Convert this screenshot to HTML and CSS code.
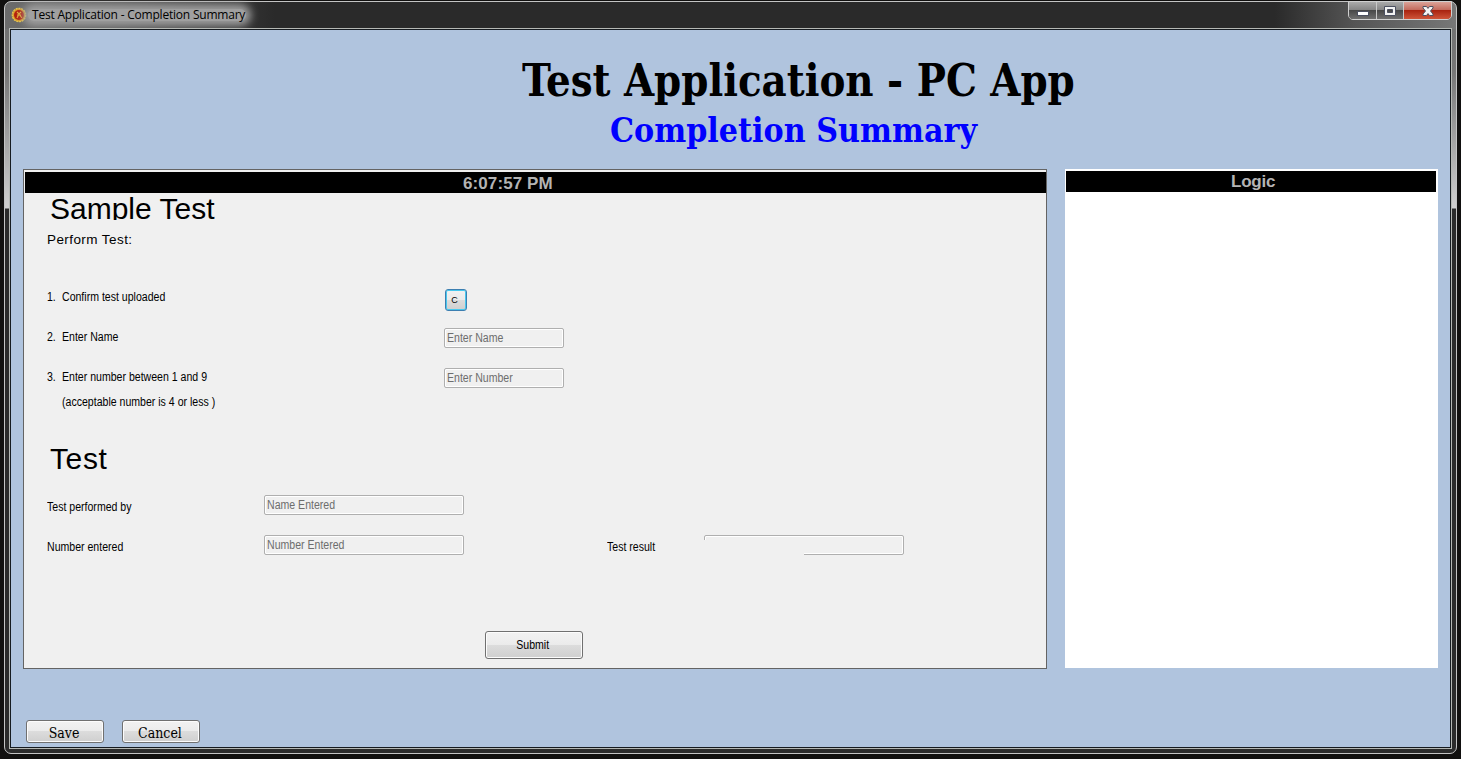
FILE: index.html
```
<!DOCTYPE html>
<html lang="en">
<head>
<meta charset="utf-8">
<title>Test Application - Completion Summary</title>
<link rel="stylesheet" href="styles.css">
</head>
<body>
<div class="window">
  <header class="titlebar">
    <svg class="app-icon" viewBox="0 0 16 16"><circle cx="8" cy="8" r="6.7" fill="#d99a2b" stroke="#e8c64d" stroke-width="1.3" stroke-dasharray="2 .8"/><circle cx="8" cy="8" r="5" fill="#b51e0c"/><path d="M6 5l2 2 2-2M6 11l2-4 3 4M6 8h4" fill="none" stroke="#e5ad35" stroke-width="1.1"/></svg>
    <span class="caption">Test Application - Completion Summary</span>
    <div class="controls">
      <span class="ctl min"><svg viewBox="0 0 14 12"><rect x="1.5" y="6.5" width="11" height="4" fill="#fff" stroke="#4c5060"/></svg></span>
      <span class="ctl max"><svg viewBox="0 0 14 12"><path d="M1.5 1.500h11v9h-11zM4.500 4.500v3h5v-3z" fill="#f2f2f2" fill-rule="evenodd" stroke="#4c5060"/></svg></span>
      <span class="ctl close"><svg viewBox="0 0 14 12"><path d="M2 1.500h3.500L7 3.400 8.500 1.500H12V3L9.500 6 12 9v1.500H8.500L7 8.600 5.500 10.500H2V9L4.500 6 2 3z" fill="#f4f4f4" stroke="#4c5060"/></svg></span>
    </div>
  </header>
  <main class="client">
    <div class="heading">
      <h1><span>Test Application - PC App</span></h1>
      <h2><span>Completion Summary</span></h2>
    </div>
    <div class="panels">
      <section class="panel">
        <div class="bar"><span class="clock">6:07:57 PM</span></div>
        <div class="section-title clipped"><span>Sample Test</span></div>
        <div class="lead">Perform Test:</div>
        <div class="row step first"><span class="num"><span class="t">1.</span></span><span class="label"><span class="t">Confirm test uploaded</span></span><button class="btn confirm">C</button></div>
        <div class="row step"><span class="num"><span class="t">2.</span></span><span class="label"><span class="t">Enter Name</span></span><span class="field"><span class="t">Enter Name</span></span></div>
        <div class="row step"><span class="num"><span class="t">3.</span></span><span class="label"><span class="t">Enter number between 1 and 9</span></span><span class="field"><span class="t">Enter Number</span></span></div>
        <div class="row note"><span class="t">(acceptable number is 4 or less )</span></div>
        <div class="section-title second"><span>Test</span></div>
        <div class="row result"><span class="name"><span class="t">Test performed by</span></span><span class="field wide"><span class="t">Name Entered</span></span></div>
        <div class="row result"><span class="name"><span class="t">Number entered</span></span><span class="field wide"><span class="t">Number Entered</span></span><span class="outcome"><span class="t">Test result</span></span><span class="field wide partial"></span></div>
        <button class="btn submit"><span class="t">Submit</span></button>
      </section>
      <section class="logic">
        <div class="bar"><span>Logic</span></div>
      </section>
    </div>
    <div class="actions">
      <button class="btn action">Save</button>
      <button class="btn action">Cancel</button>
    </div>
  </main>
</div>
</body>
</html>
```
FILE: styles.css
```
* { box-sizing: border-box; }
html, body { height: 100%; }
body {
  margin: 0;
  padding: 1px 4px 5px;
  overflow: hidden;
  background: #11100f;
  font-family: "Liberation Sans", Arial, sans-serif;
  font-size: 12px;
  color: #000;
}
h1, h2 { margin: 0; }
.window {
  height: 753px;
  padding: 0 4px 4px;
  border: 1px solid #c4c4c4;
  border-radius: 7px;
  background:
    linear-gradient(90deg, #6c6c6c 0, #555 120px, #2a2a2a 270px, #2a2a2a 1270px, #555 1350px, #777 1451px) 0 0 / 100% 27px no-repeat,
    linear-gradient(#6f6f6f 0, #777 70px, #d0d0d0 206px, #2b2b2b 207px);
}
.titlebar {
  display: flex;
  height: 26px;
}
.app-icon { width: 16px; height: 16px; margin: 5px 0 0 2px; }
.caption {
  width: 218px;
  height: 12px;
  margin: 7px 0 0 1px;
  padding-left: 4px;
  border-radius: 6px;
  background: #a0a0a0;
  box-shadow: 0 0 9px 5px #a0a0a0;
  font: 12px/12px "Open Sans", "Noto Sans", sans-serif;
  letter-spacing: -.21px;
  white-space: nowrap;
}
.controls {
  display: flex;
  width: 104px;
  height: 19px;
  margin: -1px 0 0 auto;
  border: 1px solid #d0d0d0;
  border-radius: 0 0 5px 5px;
  overflow: hidden;
}
.ctl {
  display: flex;
  justify-content: center;
  width: 28px;
  padding-top: 3px;
  border-right: 1px solid #c9c9c9;
  background: linear-gradient(#aaa 0, #858585 46%, #484848 50%, #6f6f6f 100%);
}
.ctl svg { width: 14px; height: 12px; }
.max { width: 27px; }
.close {
  flex: 1;
  border: 0;
  background: linear-gradient(#dba398 0, #c46b5d 46%, #a92410 50%, #cf5539 100%);
}
.client {
  position: relative;
  height: 719px;
  outline: 1px solid #b5b8b4;
  margin: 1px;
  border: 1px solid #161b20;
  background: #b0c4de;
}
.heading {
  height: 139px;
  padding: 26px 0 0 511px;
  font-family: "DejaVu Serif Condensed", "DejaVu Serif", serif;
  white-space: nowrap;
}
h1 { height: 50px; font-size: 44px; line-height: 50px; }
h2 { height: 40px; padding-left: 88px; font-size: 33px; line-height: 49px; color: #00f; }
h1 span, h2 span { display: inline-block; transform-origin: 0 50%; }
h1 span { transform: scaleX(.981); }
h2 span { transform: scaleX(1.018); }
.panels { display: flex; gap: 18px; padding-left: 12px; }
.panel {
  width: 1024px;
  height: 500px;
  padding: 2px 0 0 1px;
  border: 1px solid #646464;
  background: #f0f0f0;
}
.logic { width: 373px; height: 499px; padding: 2px 2px 0 1px; background: #fff; }
.bar {
  height: 21px;
  background: #000;
  color: #b4b4b4;
  font-size: 17px;
  line-height: 21px;
  font-weight: bold;
}
.panel .bar { padding-left: 438px; line-height: 23px; }
.logic .bar { padding-left: 165px; letter-spacing: -.2px; }
.clock { letter-spacing: .1px; }
.section-title { padding-left: 25px; font-size: 30px; line-height: 34px; white-space: nowrap; }
.clipped { height: 27px; line-height: 31px; overflow: hidden; }
.lead { height: 60px; padding-left: 22px; font-size: 13.5px; line-height: 40px; letter-spacing: .42px; }
.row { display: flex; padding-left: 22px; white-space: nowrap; }
.t { display: inline-block; transform: scaleX(.88); transform-origin: 0 50%; }
.step { height: 40px; line-height: 34px; }
.num { width: 15px; }
.label { width: 382px; }
.field {
  width: 120px;
  height: 20px;
  margin-top: 8px;
  padding-left: 2px;
  border: 1px solid #afafaf;
  border-radius: 2px;
  box-shadow: inset 0 0 0 1px #fff;
  line-height: 19px;
  color: #6d6d6d;
}
.note { height: 39px; margin-top: -10px; padding-left: 37px; line-height: 24px; }
.second { height: 56px; line-height: 60px; letter-spacing: .6px; }
.result { height: 40px; line-height: 44px; }
.result .name { width: 217px; }
.wide { width: 200px; margin-top: 10px; }
.outcome { width: 97px; margin-left: 143px; }
.partial {
  clip-path: polygon(0 0, 100% 0, 100% 100%, 50% 100%, 50% 5px, 0 5px);
}
.btn {
  display: flex;
  align-items: center;
  justify-content: center;
  padding: 0;
  border: 1px solid #707070;
  border-radius: 3px;
  background: linear-gradient(#f2f2f2 0, #ebebeb 48%, #dcdcdc 50%, #cfcfcf 100%);
  box-shadow: inset 0 0 0 1px #fcfcfc;
  color: #000;
}
.confirm {
  width: 22px;
  height: 22px;
  margin: 9px 0 0 1px;
  padding: 0 3px 1px 0;
  border-color: #3c7fb1;
  box-shadow: inset 0 0 0 1px #49c8ee;
  font: 9px "Liberation Sans", sans-serif;
}
.submit {
  width: 98px;
  height: 28px;
  margin: 66px 0 0 460px;
  padding-right: 3px;
  font: 12px "Liberation Sans", sans-serif;
}
.submit .t { transform-origin: 50% 50%; }
.actions { display: flex; gap: 18px; padding: 51px 0 0 15px; }
.action {
  width: 78px;
  height: 23px;
  padding: 3px 2px 0 0;
  font: 14px "DejaVu Serif Condensed", "DejaVu Serif", serif;
}
```
